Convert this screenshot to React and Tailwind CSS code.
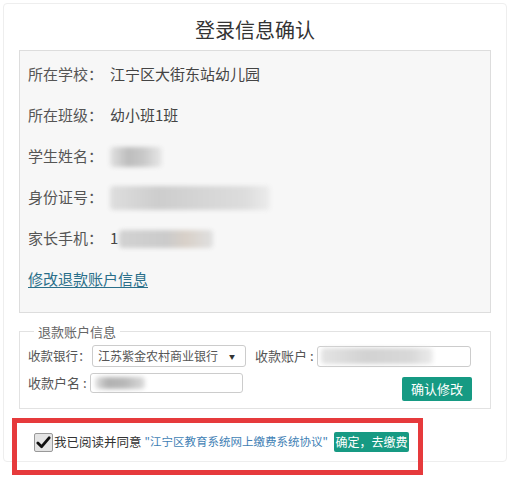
import React from 'react';

const font = { fontFamily: '"Noto Sans CJK SC", "Noto Sans", sans-serif' };

function Blur({ className }) {
  return <div className={`shrink-0 rounded-sm blur-[2px] ${className}`} />;
}

function InfoRow({ label, children }) {
  return (
    <div className="flex h-[41px] items-center text-[15px]">
      <span className="w-[82px] shrink-0 whitespace-nowrap text-[#555]">{label}</span>
      <div className="flex items-center text-[#444]">{children}</div>
    </div>
  );
}

export default function App() {
  return (
    <div className="relative h-[486px] w-[510px] overflow-hidden bg-white p-[3px]" style={font}>
      <div className="w-[504px] rounded-sm border border-[#eee] pb-[8px]">
        <h1 className="pt-[12px] text-center text-[20px] leading-[28px] text-[#333]">登录信息确认</h1>

        {/* login info */}
        <div className="ml-[15px] mt-[6px] h-[263px] w-[472px] border border-[#ddd] bg-[#f7f7f7] px-[8px] pt-[3px]">
          <InfoRow label="所在学校：">江宁区大街东站幼儿园</InfoRow>
          <InfoRow label="所在班级：">幼小班1班</InfoRow>
          <InfoRow label="学生姓名：">
            <Blur className="h-[20px] w-[52px] bg-[linear-gradient(90deg,#e2e2e2,#bdbdbd_35%,#c9c9c9_65%,#e8e8e8)]" />
          </InfoRow>
          <InfoRow label="身份证号：">
            <Blur className="h-[24px] w-[160px] bg-[linear-gradient(90deg,#dedede,#cdcdcd_30%,#d6d6d6_60%,#dddddd_85%,#ececec)]" />
          </InfoRow>
          <InfoRow label="家长手机：">
            <span>1</span>
            <Blur className="ml-[1px] h-[18px] w-[94px] bg-[linear-gradient(90deg,#d2d2d2,#cbcbcb_50%,#d8d0c8_70%,#e0e0e0)]" />
          </InfoRow>
          <div className="flex h-[41px] items-center">
            <a className="text-[15px] text-[#2a6f8a] underline underline-offset-2">修改退款账户信息</a>
          </div>
        </div>

        {/* refund account */}
        <fieldset className="ml-[15px] mt-[10px] w-[472px] border border-[#e2e2e2] px-[8px] pb-[7px]">
          <legend className="ml-[6px] px-[4px] text-[13px] leading-[17px] text-[#666]">退款账户信息</legend>
          <div className="mt-[5px] flex items-center whitespace-nowrap text-[13px] text-[#555]">
            <span className="w-[64px] shrink-0 text-[12.5px]">收款银行：</span>
            <div className="flex h-[22px] w-[154px] shrink-0 items-center justify-between rounded-[3px] border border-[#ccc] bg-white pl-[5px] pr-[10px] text-[12px] text-[#555]">
              <span>江苏紫金农村商业银行</span>
              <span className="text-[6px] text-[#333]">▼</span>
            </div>
            <span className="ml-[9px] w-[62px] shrink-0">收款账户 :</span>
            <div className="flex h-[21px] w-[154px] shrink-0 items-center rounded-[3px] border border-[#ccc] bg-white pl-[3px]">
              <Blur className="h-[16px] w-[112px] bg-[linear-gradient(90deg,#e4e4e4,#d2d2d2_40%,#d8d8d8_80%,#ececec)]" />
            </div>
          </div>
          <div className="mt-[6px] flex items-start whitespace-nowrap text-[13px] text-[#555]">
            <span className="w-[62px] shrink-0 leading-[20px]">收款户名 :</span>
            <div className="flex h-[20px] w-[153px] shrink-0 items-center rounded-[3px] border border-[#ccc] bg-white pl-[4px]">
              <Blur className="h-[12px] w-[50px] bg-[linear-gradient(90deg,#e2e2e2,#b2b2b2_25%,#b8b8b8_60%,#dcdcdc)]" />
            </div>
            <button className="ml-auto mr-[10px] mt-[4px] h-[24px] w-[70px] rounded-[2px] bg-[#169a83] text-[13px] text-white">确认修改</button>
          </div>
        </fieldset>

        {/* agreement */}
        <div className="ml-[30px] mt-[22px] flex h-[22px] items-center whitespace-nowrap">
          <div className="flex h-[19px] w-[19px] shrink-0 items-center justify-center rounded-[2px] border border-[#999] bg-[#e4e4e4]">
            <svg viewBox="0 0 16 16" className="h-[15px] w-[15px]">
              <path d="M2 8.5 L6 12.5 L14 3" fill="none" stroke="#111" strokeWidth="3" strokeLinecap="round" strokeLinejoin="round" />
            </svg>
          </div>
          <span className="ml-[1px] text-[12.5px] text-[#333]">我已阅读并同意</span>
          <a className="ml-[3px] text-[11.5px] text-[#3f7fb5]">"江宁区教育系统网上缴费系统协议"</a>
          <button className="ml-[6px] h-[20px] w-[75px] shrink-0 rounded-[2px] bg-[#179a83] px-0 text-[12px] text-white">确定，去缴费</button>
        </div>
      </div>

      {/* red annotation frame */}
      <div className="absolute left-[12px] top-[418px] h-[57px] w-[411px] border-[5px] border-[#e63a3c]" />
    </div>
  );
}
